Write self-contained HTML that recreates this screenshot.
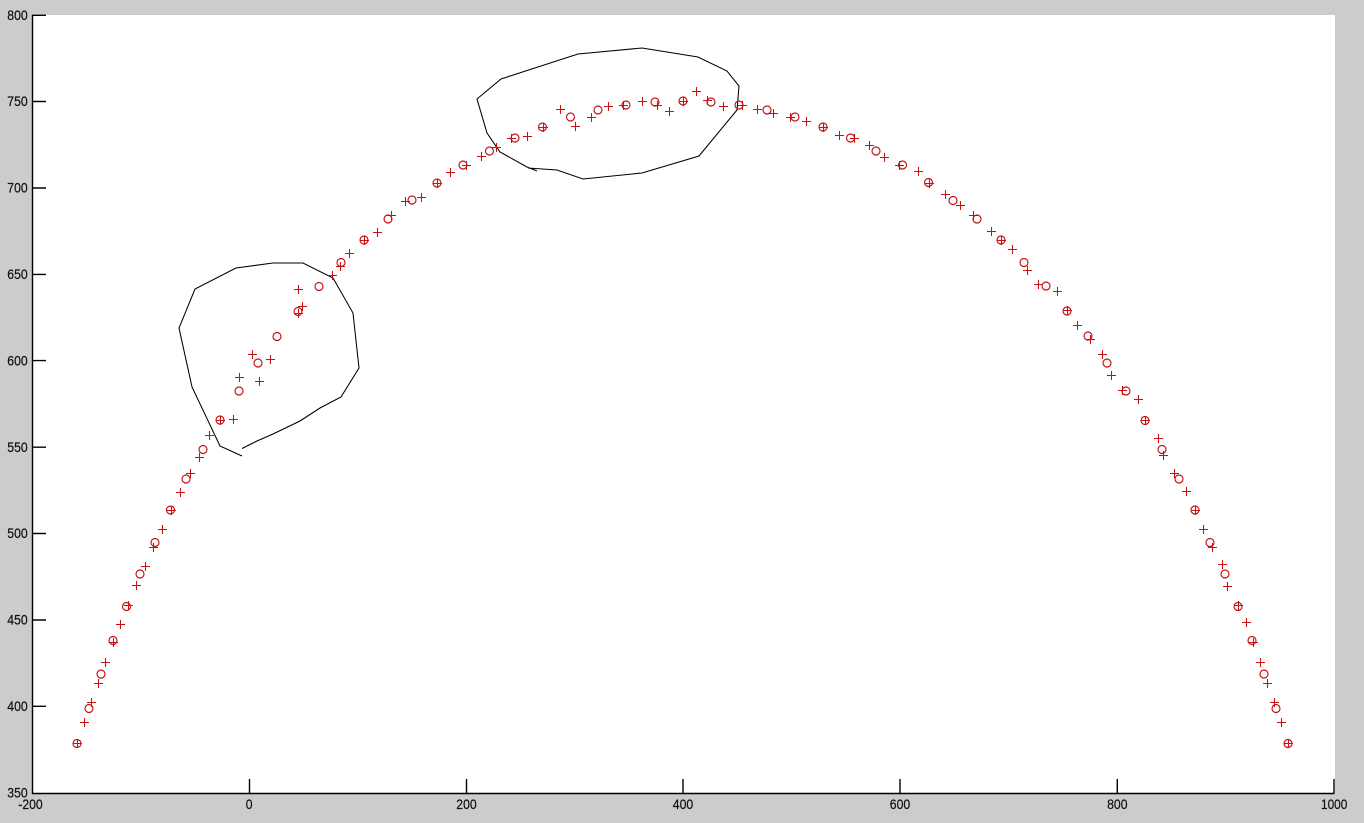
<!DOCTYPE html>
<html><head><meta charset="utf-8"><title>Plot</title>
<style>
html,body{margin:0;padding:0;background:#ccc;width:1364px;height:823px;overflow:hidden}
svg{display:block}
text{font-family:"Liberation Sans",Arial,sans-serif;font-size:14px;fill:#111;stroke:#111;stroke-width:.2px}
</style></head><body>
<svg width="1364" height="823" viewBox="0 0 1364 823" xmlns="http://www.w3.org/2000/svg">
<defs>
<marker id="c" markerUnits="userSpaceOnUse" markerWidth="12" markerHeight="12" refX="6" refY="6" overflow="visible"><circle cx="6" cy="6" r="4" fill="none" stroke="#c80f12" stroke-width="1.15"/></marker>
</defs>
<rect width="1364" height="823" fill="#ccc"/>
<rect x="33" y="15" width="1302" height="778" fill="#fff"/>
<g fill="none" stroke="#000" stroke-width="1.05">
<polyline points="242,448.5 257,441 273,434 300,421 320,408 341,397 359,368 353,313 333,278 303,263 273,263 236,268 195,289 179,328 192,387 220,446 242,456"/>
<polyline points="537,171 527,167 500,152 487,133 477,99 501,79 578,54 642,48 698,57 727,71 739,86 737,110 699,156 642,173 583,179 557,170 528,168"/>
</g>
<g fill="none" stroke="#000" stroke-width="1.4">
<path d="M32.5 14.6V793.5H1334.5M33 15.3H46M33 101.5H46M33 188H46M33 274.4H46M33 360.6H46M33 447.2H46M33 533.5H46M33 620H46M33 706.3H46"/>
<path d="M249.5 793V779M466.5 793V779M683 793V779M900 793V779M1117.3 793V779M1334 793V779"/>
</g>
<polyline fill="none" stroke="none" marker-start="url(#c)" marker-mid="url(#c)" marker-end="url(#c)" points="77,743.5 89,708.5 101,674 113,640.5 126.5,606.5 140,574 155,542.5 170.5,510 186,479 203,449.5 220,420 239,391 258,363 277,336.5 298,311.5 319,286.5 341,262.5 364,240 388,219 412,200 437,183 463,165 489.5,151 515,138 542.5,127 570.5,117 598,110 626,105 655,102 683,101 711,102 739,105 767,110 795,117 823,127 850.5,138 876,151 902.5,165 928.5,182.5 953,200.5 977,219 1001,240 1024,262.5 1046,286 1067,311 1088,336 1107,363 1126,391 1145,420.5 1162,449.5 1179,479 1195,510 1210,542.5 1225,574 1238,606.5 1252,640.5 1264,674 1276,708.5 1288,743.5"/>
<path fill="none" stroke="#c80f12" stroke-width="1.05" d="M73 743.5h9m-4.5-4.5v9M80 722.5h9m-4.5-4.5v9M87 702.5h9m-4.5-4.5v9M94 683.5h9m-4.5-4.5v9M101 662.5h9m-4.5-4.5v9M109 642.5h9m-4.5-4.5v9M116 624.5h9m-4.5-4.5v9M124 605.5h9m-4.5-4.5v9M132 585.5h9m-4.5-4.5v9M141 566.5h9m-4.5-4.5v9M149 547.5h9m-4.5-4.5v9M158 529.5h9m-4.5-4.5v9M167 510.5h9m-4.5-4.5v9M176 492.5h9m-4.5-4.5v9M186 473.5h9m-4.5-4.5v9M195 457.5h9m-4.5-4.5v9M205 435.5h9m-4.5-4.5v9M216 420.5h9m-4.5-4.5v9M229 419.5h9m-4.5-4.5v9M235 377.5h9m-4.5-4.5v9M255 381.5h9m-4.5-4.5v9M248 354.5h9m-4.5-4.5v9M266 359.5h9m-4.5-4.5v9M294 289.5h9m-4.5-4.5v9M298 306.5h9m-4.5-4.5v9M294 313.5h9m-4.5-4.5v9M328 275.5h9m-4.5-4.5v9M336 266.5h9m-4.5-4.5v9M345 253.5h9m-4.5-4.5v9M360 240.5h9m-4.5-4.5v9M373 232.5h9m-4.5-4.5v9M387 215.5h9m-4.5-4.5v9M401 201.5h9m-4.5-4.5v9M417 197.5h9m-4.5-4.5v9M433 183.5h9m-4.5-4.5v9M446 172.5h9m-4.5-4.5v9M462 165.5h9m-4.5-4.5v9M477 156.5h9m-4.5-4.5v9M492 147.5h9m-4.5-4.5v9M507 138.5h9m-4.5-4.5v9M523 136.5h9m-4.5-4.5v9M539 127.5h9m-4.5-4.5v9M556 109.5h9m-4.5-4.5v9M571 126.5h9m-4.5-4.5v9M587 117.5h9m-4.5-4.5v9M604 106.5h9m-4.5-4.5v9M619 105.5h9m-4.5-4.5v9M638 101.5h9m-4.5-4.5v9M653 105.5h9m-4.5-4.5v9M665 111.5h9m-4.5-4.5v9M679 101.5h9m-4.5-4.5v9M692 91.5h9m-4.5-4.5v9M703 100.5h9m-4.5-4.5v9M719 106.5h9m-4.5-4.5v9M738 105.5h9m-4.5-4.5v9M753 109.5h9m-4.5-4.5v9M769 113.5h9m-4.5-4.5v9M786 117.5h9m-4.5-4.5v9M802 121.5h9m-4.5-4.5v9M819 127.5h9m-4.5-4.5v9M835 135.5h9m-4.5-4.5v9M850 138.5h9m-4.5-4.5v9M865 145.5h9m-4.5-4.5v9M880 157.5h9m-4.5-4.5v9M895 165.5h9m-4.5-4.5v9M914 171.5h9m-4.5-4.5v9M925 183.5h9m-4.5-4.5v9M941 194.5h9m-4.5-4.5v9M956 205.5h9m-4.5-4.5v9M969 215.5h9m-4.5-4.5v9M987 231.5h9m-4.5-4.5v9M997 240.5h9m-4.5-4.5v9M1008 249.5h9m-4.5-4.5v9M1023 270.5h9m-4.5-4.5v9M1034 284.5h9m-4.5-4.5v9M1053 291.5h9m-4.5-4.5v9M1063 310.5h9m-4.5-4.5v9M1073 325.5h9m-4.5-4.5v9M1086 339.5h9m-4.5-4.5v9M1098 354.5h9m-4.5-4.5v9M1107 375.5h9m-4.5-4.5v9M1118 390.5h9m-4.5-4.5v9M1134 399.5h9m-4.5-4.5v9M1141 420.5h9m-4.5-4.5v9M1154 438.5h9m-4.5-4.5v9M1159 455.5h9m-4.5-4.5v9M1170 473.5h9m-4.5-4.5v9M1182 491.5h9m-4.5-4.5v9M1191 510.5h9m-4.5-4.5v9M1199 529.5h9m-4.5-4.5v9M1208 547.5h9m-4.5-4.5v9M1218 564.5h9m-4.5-4.5v9M1223 586.5h9m-4.5-4.5v9M1234 605.5h9m-4.5-4.5v9M1242 622.5h9m-4.5-4.5v9M1249 642.5h9m-4.5-4.5v9M1256 662.5h9m-4.5-4.5v9M1263 683.5h9m-4.5-4.5v9M1270 702.5h9m-4.5-4.5v9M1277 722.5h9m-4.5-4.5v9M1284 743.5h9m-4.5-4.5v9"/>
<g>
<text x="7.3" y="20" textLength="20.4" lengthAdjust="spacingAndGlyphs">800</text>
<text x="7.3" y="106.2" textLength="20.4" lengthAdjust="spacingAndGlyphs">750</text>
<text x="7.3" y="192.7" textLength="20.4" lengthAdjust="spacingAndGlyphs">700</text>
<text x="7.3" y="279.1" textLength="20.4" lengthAdjust="spacingAndGlyphs">650</text>
<text x="7.3" y="365.3" textLength="20.4" lengthAdjust="spacingAndGlyphs">600</text>
<text x="7.3" y="451.9" textLength="20.4" lengthAdjust="spacingAndGlyphs">550</text>
<text x="7.3" y="538.2" textLength="20.4" lengthAdjust="spacingAndGlyphs">500</text>
<text x="7.3" y="624.7" textLength="20.4" lengthAdjust="spacingAndGlyphs">450</text>
<text x="7.3" y="711" textLength="20.4" lengthAdjust="spacingAndGlyphs">400</text>
<text x="7.3" y="797.7" textLength="20.4" lengthAdjust="spacingAndGlyphs">350</text>
<text x="18.3" y="809" textLength="24.4" lengthAdjust="spacingAndGlyphs">-200</text>
<text x="245.8" y="809" textLength="6.8" lengthAdjust="spacingAndGlyphs">0</text>
<text x="456.3" y="809" textLength="20.4" lengthAdjust="spacingAndGlyphs">200</text>
<text x="672.8" y="809" textLength="20.4" lengthAdjust="spacingAndGlyphs">400</text>
<text x="889.8" y="809" textLength="20.4" lengthAdjust="spacingAndGlyphs">600</text>
<text x="1107.1" y="809" textLength="20.4" lengthAdjust="spacingAndGlyphs">800</text>
<text x="1321" y="809" textLength="26.3" lengthAdjust="spacingAndGlyphs">1000</text>
</g>
</svg>
</body></html>
